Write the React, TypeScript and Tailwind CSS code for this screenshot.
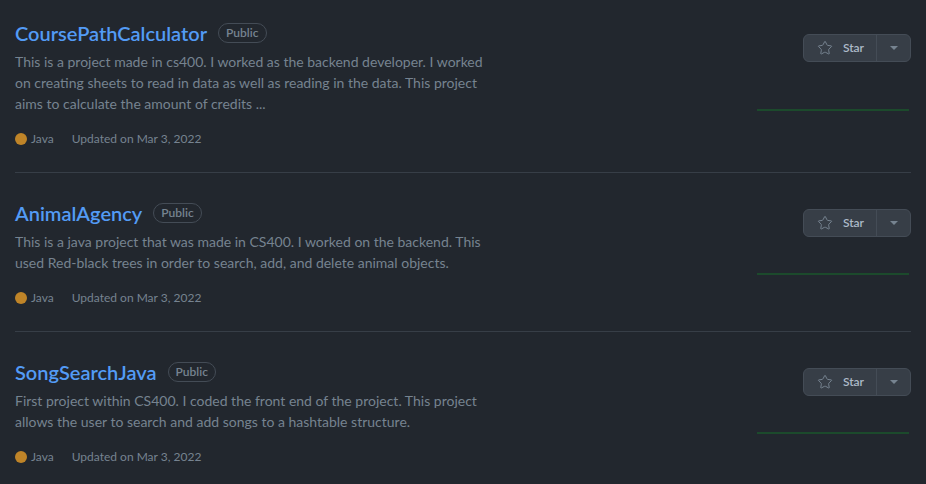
import { Star } from 'lucide-react';

const repos = [
  {
    name: 'CoursePathCalculator',
    desc: 'This is a project made in cs400. I worked as the backend developer. I worked on creating sheets to read in data as well as reading in the data. This project aims to calculate the amount of credits ...',
  },
  {
    name: 'AnimalAgency',
    desc: 'This is a java project that was made in CS400. I worked on the backend. This used Red-black trees in order to search, add, and delete animal objects.',
  },
  {
    name: 'SongSearchJava',
    desc: 'First project within CS400. I coded the front end of the project. This project allows the user to search and add songs to a hashtable structure.',
  },
];

export default function App() {
  return (
    <div
      className="h-screen overflow-hidden bg-[#22272e] px-[15px]"
      style={{ fontFamily: 'Lato, "Liberation Sans", Arial, sans-serif' }}
    >
      <div className="-mt-[7px]">
        {repos.map((r) => (
          <div key={r.name} className="flex border-b border-[#373e47] py-6">
            {/* Left: title, description, meta */}
            <div className="flex-1 min-w-0">
              <div className="flex items-center h-8">
                <a className="text-[20px] font-semibold text-[#539bf5] leading-8">{r.name}</a>
                <span className="ml-[11px] h-5 px-[7px] flex items-center rounded-full border border-[#444c56] text-xs font-semibold text-[#768390]">
                  Public
                </span>
              </div>
              <p className="mt-[2px] w-[485px] text-sm leading-[21px] text-[#768390]">{r.desc}</p>
              <div className="mt-4 flex items-center h-[18px] text-xs text-[#768390]">
                <span className="w-3 h-3 rounded-full bg-[#bf8428]" />
                <span className="ml-[4px]">Java</span>
                <span className="ml-[18px]">Updated on Mar 3, 2022</span>
              </div>
            </div>

            {/* Right: star button + sparkline */}
            <div className="w-[155px] shrink-0 flex flex-col justify-around items-end">
              <div className="flex h-7 rounded-md border border-[#444c56] bg-[#373e47]">
                <button className="flex items-center gap-[10px] pl-[13px] pr-3 text-xs font-semibold text-[#adbac7] border-r border-[#444c56]">
                  <Star size={16} strokeWidth={1.5} className="text-[#768390]" />
                  Star
                </button>
                <button className="w-[33px] flex items-center justify-center">
                  <span className="w-0 h-0 border-l-4 border-r-4 border-t-4 border-l-transparent border-r-transparent border-t-[#768390]" />
                </button>
              </div>
              <div className="w-[155px] h-[34px] pt-[12px]">
                <div className="ml-px mr-[2px] h-[2px] bg-[#1c4a2c]" />
              </div>
            </div>
          </div>
        ))}
      </div>
    </div>
  );
}
